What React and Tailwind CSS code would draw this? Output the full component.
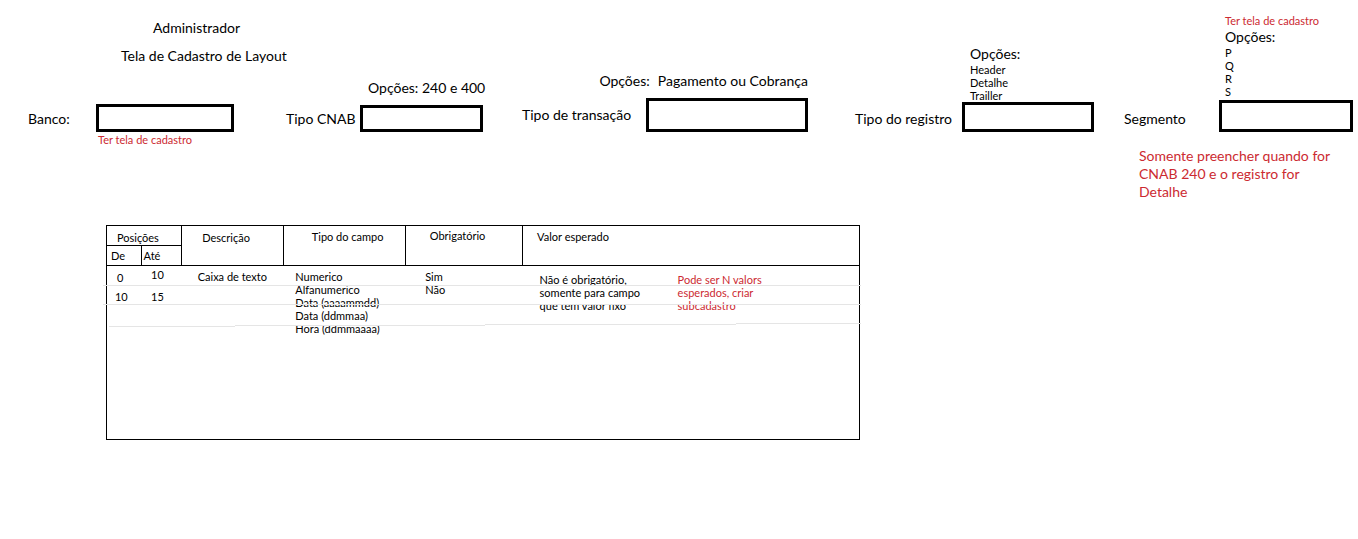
const labelText = "text-[14px] leading-[18px]";
const smallText = "text-[11px] leading-[13px]";
const redText = "text-[#cc2a31]";

function Field({ id, label, className, labelClass, inputClass, children }) {
  return (
    <div className={`row-start-1 flex items-end ${className}`}>
      <label htmlFor={id} className={`shrink-0 whitespace-nowrap ${labelText} ${labelClass}`}>
        {label}
      </label>
      <div className="flex min-w-0 flex-1 flex-col">
        {children}
        <input
          id={id}
          type="text"
          className={`w-full min-w-0 border-3 border-black bg-white px-1 outline-none ${labelText} ${inputClass}`}
        />
      </div>
    </div>
  );
}

function Options({ items }) {
  return (
    <>
      <p className={labelText}>Opções:</p>
      <ul className={smallText}>
        {items.map((item) => (
          <li key={item}>{item}</li>
        ))}
      </ul>
    </>
  );
}

function RowRules() {
  return (
    <div aria-hidden="true" className="pointer-events-none absolute top-[60px] -right-px -left-[3px]">
      <div className="h-px bg-[#e5e5e5]" />
      <div className="ml-[57%] mt-[15px] h-[3px] w-[15%] bg-white" />
      <div className="h-px bg-[#e5e5e5]" />
      <div className="ml-[25%] mt-[18px] h-[2px] w-[13%] bg-white" />
      <svg viewBox="0 0 757 4" preserveAspectRatio="none" className="-mt-[2px] block h-1 w-full" shapeRendering="crispEdges">
        <path
          d="M6 3h126v1H6zM132 2h250v1H132zM382 1h250v1H382zM632 0h125v1H632z"
          fill="#e5e5e5"
        />
      </svg>
    </div>
  );
}

export default function App() {
  return (
    <main className="min-h-screen bg-white pb-8 font-['Lato','Liberation_Sans',sans-serif] text-black">
      <form className="grid grid-cols-[minmax(0,234fr)_minmax(0,249fr)_minmax(0,325fr)_minmax(0,286fr)_minmax(0,259fr)_minmax(0,5fr)] pt-[14px]">
        <header className="col-span-2 col-start-1 row-start-1 self-start pt-[5px] pl-[121px]">
          <p className={`pl-8 ${labelText}`}>Administrador</p>
          <h1 className={`mt-[10px] ${labelText}`}>Tela de Cadastro de Layout</h1>
        </header>

        <Field id="banco" label="Banco:" className="col-start-1 pl-7" labelClass="w-[68px] pb-1" inputClass="h-[28px]" />

        <Field id="cnab" label="Tipo CNAB" className="col-start-2 pl-[52px]" labelClass="w-[74px] pb-1" inputClass="h-[27px]">
          <p className={`mb-2 pl-2 whitespace-nowrap ${labelText}`}>Opções: 240 e 400</p>
        </Field>

        <Field id="transacao" label="Tipo de transação" className="col-start-3 pl-[39px]" labelClass="w-[124px] pb-2" inputClass="h-[34px]">
          <p className={`mb-2 flex justify-end gap-2 whitespace-nowrap ${labelText}`}>
            <span>Opções:</span>
            <span>Pagamento ou Cobrança</span>
          </p>
        </Field>

        <Field id="registro" label="Tipo do registro" className="col-start-4 pl-[47px]" labelClass="w-[107px] pb-1" inputClass="h-[30px]">
          <div className="pl-2">
            <Options items={["Header", "Detalhe", "Trailler"]} />
          </div>
        </Field>

        <Field id="segmento" label="Segmento" className="col-start-5 pl-[30px]" labelClass="w-[95px] pb-1" inputClass="h-[32px]">
          <div className="mb-[2px] pl-[6px]">
            <p className={`mb-px ${smallText} ${redText}`}>Ter tela de cadastro</p>
            <Options items={["P", "Q", "R", "S"]} />
          </div>
        </Field>

        <p className={`col-start-1 row-start-2 mt-px pl-[98px] ${smallText} ${redText}`}>Ter tela de cadastro</p>
        <p className={`col-start-5 row-start-2 mt-[15px] pr-4 pl-[45px] ${labelText} ${redText}`}>
          Somente preencher quando for CNAB 240 e o registro for Detalhe
        </p>
      </form>

      <section className="relative mt-6 ml-[7.8%] w-[55.5%]">
        <table className={`w-full table-fixed border-collapse border border-black text-left ${smallText}`}>
          <colgroup>
            <col className="w-[4.6%]" />
            <col className="w-[5.4%]" />
            <col className="w-[13.5%]" />
            <col className="w-[16.2%]" />
            <col className="w-[15.6%]" />
            <col className="w-[44.7%]" />
          </colgroup>
          <thead className="align-top">
            <tr className="h-5">
              <th colSpan={2} className="border border-black pt-[5px] pl-[10px] font-normal">Posições</th>
              <th rowSpan={2} className="border border-black pt-[5px] pl-5 font-normal">Descrição</th>
              <th rowSpan={2} className="border border-black pt-1 pl-7 font-normal">Tipo do campo</th>
              <th rowSpan={2} className="border border-black pt-[3px] pl-6 font-normal">Obrigatório</th>
              <th rowSpan={2} className="border border-black pt-1 pl-[14px] font-normal">Valor esperado</th>
            </tr>
            <tr className="h-5">
              <th className="border border-black pt-[3px] pl-1 font-normal">De</th>
              <th className="border border-black pt-[3px] pl-[2px] font-normal">Até</th>
            </tr>
          </thead>
          <tbody className="align-top">
            <tr className="h-5">
              <td className="pt-[5px] pl-[10px]">0</td>
              <td className="pt-[2px] pl-[10px]">10</td>
              <td className="pt-1 pl-4">Caixa de texto</td>
              <td rowSpan={2} className="pt-1 pl-3">
                <ul>
                  <li>Numerico</li>
                  <li>Alfanumerico</li>
                  <li>Data (aaaammdd)</li>
                  <li>Data (ddmmaa)</li>
                  <li>Hora (ddmmaaaa)</li>
                </ul>
              </td>
              <td rowSpan={2} className="pt-1 pl-5">
                <ul>
                  <li>Sim</li>
                  <li>Não</li>
                </ul>
              </td>
              <td rowSpan={2} className="pt-[7px] pl-[17px]">
                <div className="flex gap-7">
                  <p className="w-[110px]">Não é obrigatório, somente para campo que tem valor fixo</p>
                  <p className={`w-[90px] ${redText}`}>Pode ser N valors esperados, criar subcadastro</p>
                </div>
              </td>
            </tr>
            <tr className="h-[154px]">
              <td className="pt-1 pl-2">10</td>
              <td className="pt-1 pl-[10px]">15</td>
              <td />
            </tr>
          </tbody>
        </table>
        <RowRules />
      </section>
    </main>
  );
}
